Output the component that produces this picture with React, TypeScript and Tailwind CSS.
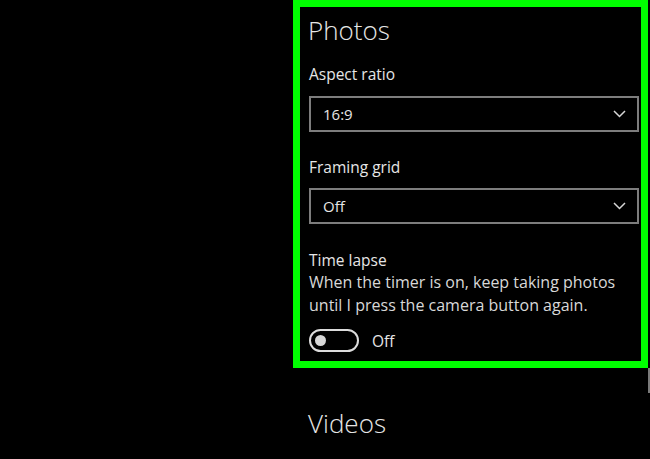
import React from 'react';

function Chevron() {
  return (
    <svg width="13" height="8" viewBox="0 0 13 8" fill="none" className="shrink-0">
      <polyline points="1,1 6.5,6.5 12,1" stroke="#d6d6d6" strokeWidth="1.5" />
    </svg>
  );
}

function Select({ value }: { value: string }) {
  return (
    <div className="ml-[9px] mr-[2px] flex h-[36px] items-center justify-between border-2 border-[#7d7d7d] pl-[12px] pr-[11px]">
      <span className="text-[15px] leading-[20px]">{value}</span>
      <Chevron />
    </div>
  );
}

export default function App() {
  return (
    <div className="relative h-[459px] w-[650px] overflow-hidden bg-black font-['Open_Sans',sans-serif] text-[#e6e6e6]">
      <div className="ml-[293px] w-[355px]">
        <section className="h-[368px] border-[7px] border-[#00ff00] pt-[6px]">
          <h1 className="ml-[8px] text-[26px] font-light leading-[34px]">Photos</h1>

          <div className="ml-[9px] mt-[17px] text-[15.5px] leading-[20px]">Aspect ratio</div>
          <div className="mt-[12px]">
            <Select value="16:9" />
          </div>

          <div className="ml-[9px] mt-[25px] text-[15.5px] leading-[20px]">Framing grid</div>
          <div className="mt-[11px]">
            <Select value="Off" />
          </div>

          <div className="ml-[9px] mt-[26px] text-[15.5px] leading-[20px]">Time lapse</div>
          <p className="ml-[9px] mt-[1px] text-[16px] leading-[23px] text-[#d8d8d8]">
            When the timer is on, keep taking photos
            <br />
            until I press the camera button again.
          </p>

          <div className="ml-[9px] mt-[12px] flex items-center gap-[13px]">
            <div className="flex h-[23px] w-[50px] items-center rounded-full border-2 border-[#dcdcdc] pl-[4px]">
              <div className="h-[11px] w-[11px] rounded-full bg-[#d6d6d6]" />
            </div>
            <span className="text-[15.5px] leading-[20px]">Off</span>
          </div>
        </section>

        <h2 className="ml-[15px] mt-[38px] text-[26px] font-light leading-[34px]">Videos</h2>
      </div>

      <div className="absolute right-0 top-[368px] h-[25px] w-[2px] bg-[#7a7a7a]" />
    </div>
  );
}
